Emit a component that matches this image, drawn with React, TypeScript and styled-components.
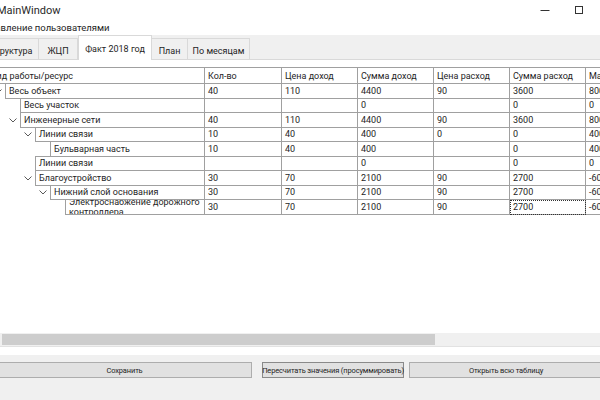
import React from 'react'
import styled, { createGlobalStyle } from 'styled-components'

const GlobalStyle = createGlobalStyle`
  html, body {
    margin: 0;
    padding: 0;
    background: #f0f0f0;
  }
  body {
    width: 600px;
    height: 400px;
    overflow: hidden;
    font-family: Roboto, 'Liberation Sans', sans-serif;
    color: #1e1e1e;
  }
`

const COLS = '205px 77px 76px 76px 76px 76px 80px'

const Window = styled.div`
  display: flex;
  flex-direction: column;
  width: 600px;
  height: 400px;
  overflow: hidden;
  background: #f0f0f0;
`

const TitleBar = styled.div`
  flex: none;
  height: 20px;
  display: flex;
  align-items: center;
  background: #fff;
`

const Title = styled.span`
  flex: 1;
  margin-left: -3px;
  font-size: 11px;
  color: #2a2a2a;
`

const WinButton = styled.div`
  width: 34px;
  height: 20px;
  display: flex;
  align-items: center;
  justify-content: center;
`

const MenuBar = styled.div`
  flex: none;
  height: 15px;
  display: flex;
  align-items: center;
  background: #fff;
`

const MenuItem = styled.span`
  margin-left: -21px;
  font-size: 9.5px;
`

const TabBar = styled.div`
  flex: none;
  height: 24px;
  display: flex;
  align-items: flex-end;
  background: #f0f0f0;
`

const Tab = styled.div<{ $w: number; $active?: boolean; $first?: boolean }>`
  width: ${p => p.$w}px;
  height: ${p => (p.$active ? 25 : 21)}px;
  margin-left: ${p => (p.$first ? -16 : 0)}px;
  margin-bottom: ${p => (p.$active ? -1 : 0)}px;
  box-sizing: border-box;
  display: flex;
  align-items: center;
  justify-content: center;
  padding-top: ${p => (p.$active ? 2 : 4)}px;
  font-size: 9px;
  background: ${p => (p.$active ? '#fff' : '#f0f0f0')};
  border: 1px solid #d9d9d9;
  border-bottom: none;
  border-left: ${p => (p.$active ? '1px solid #d9d9d9' : 'none')};
  position: relative;
  z-index: ${p => (p.$active ? 1 : 0)};
`

const TabPage = styled.div`
  flex: none;
  height: 296px;
  box-sizing: border-box;
  display: flex;
  flex-direction: column;
  background: #fff;
  border-top: 1px solid #d9d9d9;
  padding-top: 7px;
`

const TableArea = styled.div`
  flex: 1;
  overflow: hidden;
  font-size: 9px;
`

const Row = styled.div<{ $header?: boolean }>`
  display: grid;
  grid-template-columns: ${COLS};
  grid-template-rows: ${p => (p.$header ? 16 : 14.5)}px;
  box-sizing: border-box;
  border-top: ${p => (p.$header ? '1px solid #a0a0a0' : 'none')};
`

const HeadCell = styled.div<{ $indent?: number }>`
  display: flex;
  align-items: center;
  padding-left: 3px;
  text-indent: ${p => p.$indent ?? 0}px;
  white-space: nowrap;
  overflow: hidden;
  border-right: 1px solid #a0a0a0;
  border-bottom: 1px solid #a0a0a0;
`

const NameCell = styled.div`
  display: flex;
  min-width: 0;
  min-height: 0;
  border-right: 1px solid #a0a0a0;
`

const Toggle = styled.div<{ $level: number }>`
  flex: none;
  width: 15px;
  margin-left: ${p => p.$level * 15 - 10}px;
  display: flex;
  align-items: center;
  justify-content: center;
`

const NameBox = styled.div`
  flex: 1;
  min-width: 0;
  margin-top: -1px;
  display: flex;
  align-items: center;
  padding-left: 3px;
  overflow: hidden;
  border-left: 1px solid #a0a0a0;
  border-top: 1px solid #a0a0a0;
  border-bottom: 1px solid #a0a0a0;
`

const NameText = styled.span<{ $wrap?: boolean }>`
  display: block;
  flex: none;
  width: ${p => (p.$wrap ? '140px' : '100%')};
  line-height: 10px;
  white-space: ${p => (p.$wrap ? 'normal' : 'nowrap')};
`

const Cell = styled.div<{ $focused?: boolean }>`
  display: flex;
  align-items: center;
  padding-left: 3px;
  white-space: nowrap;
  overflow: hidden;
  border-right: 1px solid #a0a0a0;
  border-bottom: 1px solid #a0a0a0;
  outline: ${p => (p.$focused ? '1px dotted #333' : 'none')};
  outline-offset: -1px;
`

const HScroll = styled.div`
  flex: none;
  height: 14px;
  box-sizing: border-box;
  padding: 1px 0;
  background: #f0f0f0;
  border-bottom: 1px solid #e2e2e2;
`

const Thumb = styled.div`
  width: 433px;
  height: 100%;
  margin-left: 2px;
  background: #cdcdcd;
`

const PageBottom = styled.div`
  flex: none;
  height: 8px;
`

const Footer = styled.div`
  flex: 1;
  display: flex;
  align-items: flex-start;
  padding-top: 7px;
`

const Button = styled.div<{ $w: number; $gap: number; $default?: boolean }>`
  width: ${p => p.$w}px;
  height: 16px;
  margin-left: ${p => p.$gap}px;
  flex: none;
  box-sizing: border-box;
  display: flex;
  align-items: center;
  justify-content: center;
  font-size: 7.5px;
  letter-spacing: -0.15px;
  white-space: nowrap;
  background: #e1e1e1;
  border: 1px solid ${p => (p.$default ? '#8a8a8a' : '#adadad')};
`

const Chevron = () => (
  <svg width="8" height="5" viewBox="0 0 8 5">
    <polyline points="0.5,0.5 4,4 7.5,0.5" fill="none" stroke="#5a5a5a" strokeWidth="1" />
  </svg>
)

type Item = {
  name: string
  level: number
  open?: boolean
  values: string[]
}

const headers = ['Кол-во', 'Цена доход', 'Сумма доход', 'Цена расход', 'Сумма расход', 'Маржа']

const items: Item[] = [
  { name: 'Весь объект', level: 0, open: true, values: ['40', '110', '4400', '90', '3600', '800'] },
  { name: 'Весь участок', level: 1, values: ['', '', '0', '', '0', '0'] },
  { name: 'Инженерные сети', level: 1, open: true, values: ['40', '110', '4400', '90', '3600', '800'] },
  { name: 'Линии связи', level: 2, open: true, values: ['10', '40', '400', '0', '0', '400'] },
  { name: 'Бульварная часть', level: 3, values: ['10', '40', '400', '', '0', '400'] },
  { name: 'Линии связи', level: 2, values: ['', '', '0', '', '0', '0'] },
  { name: 'Благоустройство', level: 2, open: true, values: ['30', '70', '2100', '90', '2700', '-600'] },
  { name: 'Нижний слой основания', level: 3, open: true, values: ['30', '70', '2100', '90', '2700', '-600'] },
  { name: 'Электроснабжение дорожного контроллера', level: 4, values: ['30', '70', '2100', '90', '2700', '-600'] }
]

const tabs = [
  { label: 'Структура', w: 55 },
  { label: 'ЖЦП', w: 39 },
  { label: 'Факт 2018 год', w: 74, active: true },
  { label: 'План', w: 36 },
  { label: 'По месяцам', w: 62 }
]

export default function App() {
  return (
    <>
      <GlobalStyle />
      <Window>
        <TitleBar>
          <Title>MainWindow</Title>
          <WinButton>
            <svg width="10" height="10" viewBox="0 0 10 10">
              <line x1="0.5" y1="5.5" x2="9.5" y2="5.5" stroke="#333" strokeWidth="1" />
            </svg>
          </WinButton>
          <WinButton>
            <svg width="10" height="10" viewBox="0 0 10 10">
              <rect x="1.5" y="1.5" width="7" height="7" fill="none" stroke="#333" strokeWidth="1" />
            </svg>
          </WinButton>
          <div style={{ width: 4 }} />
        </TitleBar>

        <MenuBar>
          <MenuItem>Управление пользователями</MenuItem>
        </MenuBar>

        <TabBar>
          {tabs.map((t, i) => (
            <Tab key={t.label} $w={t.w} $active={t.active} $first={i === 0}>
              {t.label}
            </Tab>
          ))}
        </TabBar>

        <TabPage>
          <TableArea>
            <Row $header>
              <HeadCell $indent={-12}>Вид работы/ресурс</HeadCell>
              {headers.map(h => (
                <HeadCell key={h}>{h}</HeadCell>
              ))}
            </Row>
            {items.map((it, r) => (
              <Row key={r}>
                <NameCell>
                  <Toggle $level={it.level}>{it.open && <Chevron />}</Toggle>
                  <NameBox>
                    <NameText $wrap={it.level === 4}>{it.name}</NameText>
                  </NameBox>
                </NameCell>
                {it.values.map((v, c) => (
                  <Cell key={c} $focused={r === items.length - 1 && c === 4}>
                    {v}
                  </Cell>
                ))}
              </Row>
            ))}
          </TableArea>
          <HScroll>
            <Thumb />
          </HScroll>
          <PageBottom />
        </TabPage>

        <Footer>
          <Button $w={255} $gap={-3}>Сохранить</Button>
          <Button $w={142} $gap={10} $default>Пересчитать значения (просуммировать)</Button>
          <Button $w={194} $gap={5}>Открыть всю таблицу</Button>
        </Footer>
      </Window>
    </>
  )
}
